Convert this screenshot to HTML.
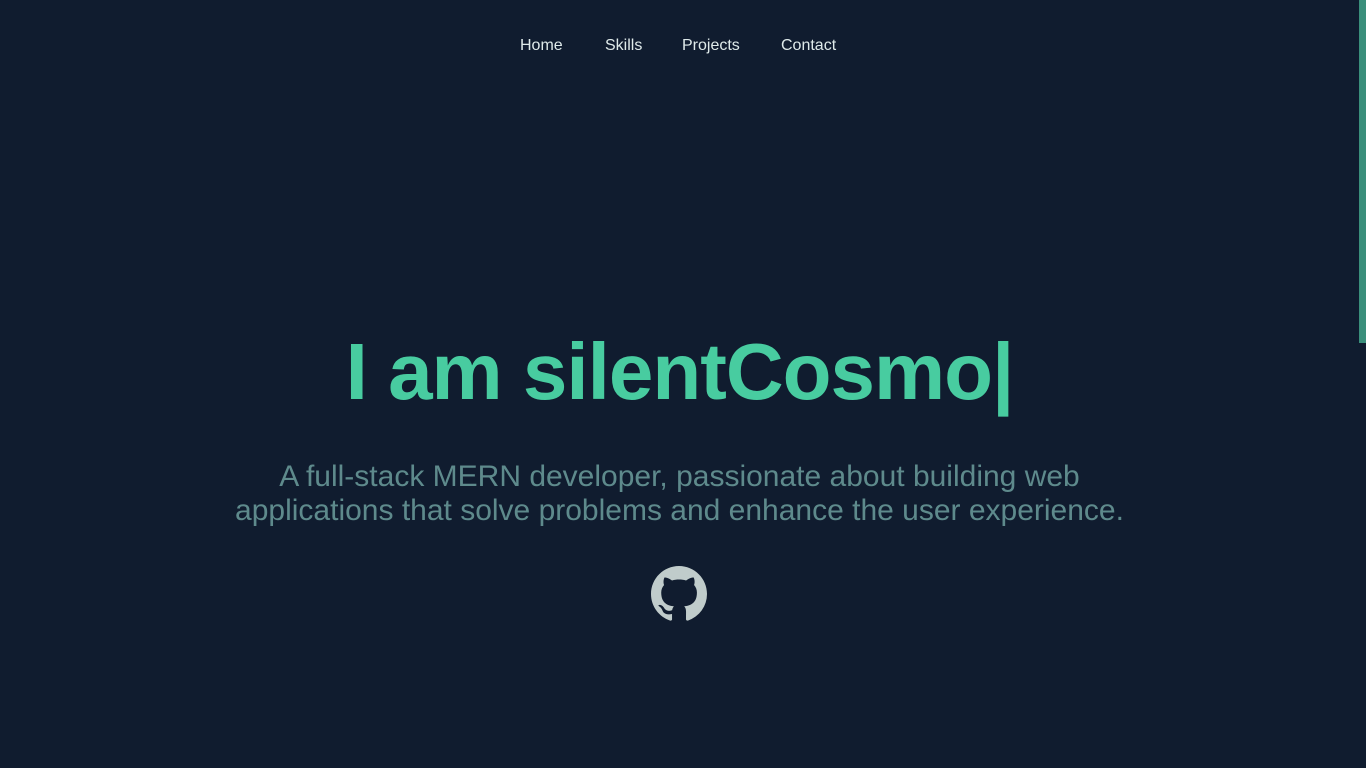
<!DOCTYPE html>
<html><head><meta charset="utf-8"><style>
html,body{margin:0;padding:0;background:#101c2f;width:1366px;height:768px;overflow:hidden;font-family:"Liberation Sans",Arial,sans-serif}
nav{position:absolute;top:37px;left:0;width:1359px;text-align:center;font-size:16px;color:#dfeaea}
nav span{position:absolute;top:0}
h1{position:absolute;top:332px;left:0;width:1359px;margin:0;text-align:center;font-size:80px;font-weight:bold;color:#48cca0;line-height:80px;white-space:nowrap;letter-spacing:-1px}
p{position:absolute;top:460px;left:0;width:1359px;margin:0;text-align:center;font-size:30px;line-height:34px;color:#5e8a8c;white-space:nowrap}
svg.gh{position:absolute;left:651px;top:566px}
.sb{position:absolute;right:0;top:0;width:7px;height:343px;background:#3a8f7b}
</style></head><body>
<nav><span style="left:520px">Home</span><span style="left:605px">Skills</span><span style="left:682px">Projects</span><span style="left:781px">Contact</span></nav>
<h1>I am silentCosmo|</h1>
<p>A full-stack MERN developer, passionate about building web<br>applications that solve problems and enhance the user experience.</p>
<svg class="gh" width="56" height="56" viewBox="0 0 16 16"><path fill="#c0cccb" d="M8 0C3.58 0 0 3.58 0 8c0 3.54 2.29 6.53 5.470 7.59.4.07.55-.17.55-.38 0-.19-.01-.82-.01-1.490-2.01.37-2.53-.49-2.69-.94-.09-.23-.48-.94-.82-1.130-.28-.15-.68-.52-.01-.53.63-.01 1.080.58 1.230.82.72 1.210 1.870.87 2.330.66.07-.52.28-.87.51-1.070-1.780-.2-3.640-.89-3.640-3.950 0-.87.31-1.590.82-2.150-.08-.2-.36-1.020.08-2.120 0 0 .67-.21 2.200.82.64-.18 1.320-.27 2-.27.68 0 1.360.09 2 .27 1.530-1.040 2.200-.82 2.200-.82.44 1.100.16 1.920.08 2.120.51.56.82 1.270.82 2.150 0 3.070-1.870 3.750-3.650 3.950.29.25.54.73.54 1.480 0 1.070-.01 1.930-.01 2.200 0 .21.15.46.55.38A8.013 8.013 0 0016 8c0-4.420-3.580-8-8-8z"/></svg>
<div class="sb"></div>
</body></html>
